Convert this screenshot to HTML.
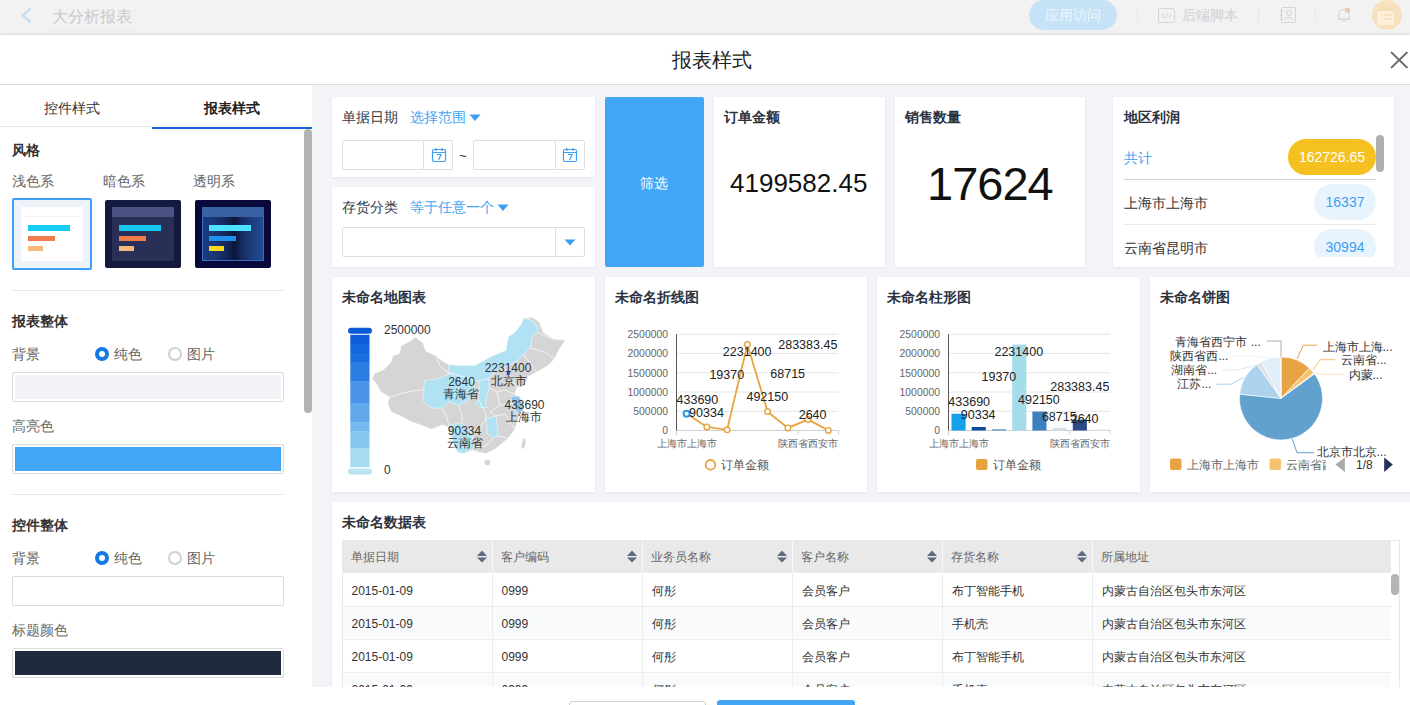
<!DOCTYPE html>
<html><head><meta charset="utf-8">
<style>
*{box-sizing:border-box;margin:0;padding:0}
html,body{width:1410px;height:705px;overflow:hidden;background:#fff;font-family:"Liberation Sans",sans-serif;color:#333}
.a{position:absolute;white-space:nowrap}
#top{position:absolute;left:0;top:0;width:1410px;height:35px;background:#f2f2f2}
#modal{position:absolute;left:0;top:35px;width:1410px;height:670px;background:#fff;box-shadow:0 -1px 3px rgba(0,0,0,.10)}
.t14{font-size:14px;line-height:14px}
.card{position:absolute;background:#fff;box-shadow:0 1px 3px rgba(30,40,70,.06)}
.ttl{position:absolute;font-size:14px;line-height:14px;font-weight:bold;color:#2b3340;white-space:nowrap}
</style></head><body>
<div id="top">
  <svg class="a" style="left:20px;top:7px" width="14" height="18" viewBox="0 0 14 18"><path d="M10.5 1.5 L2.8 8.5 L10.5 15.5" fill="none" stroke="#b9dcf5" stroke-width="1.9"/></svg>
  <div class="a" style="left:52px;top:9px;font-size:16px;line-height:16px;color:#c9c9c9">大分析报表</div>
  <div class="a" style="left:50px;top:30px;width:88px;border-top:1px dashed #e6e6e6"></div>
  <div class="a" style="left:1029px;top:0px;width:88px;height:30px;border-radius:15px;background:#c6e2f6;color:#eef6fd;font-size:14px;line-height:30px;text-align:center">应用访问</div>
  <div class="a" style="left:1137px;top:8px;width:1px;height:14px;background:#e6e6e6"></div>
  <svg class="a" style="left:1158px;top:8px" width="17" height="15" viewBox="0 0 17 15"><rect x="0.5" y="0.5" width="16" height="14" rx="2" fill="none" stroke="#d4d4d4"/><path d="M6 5 L4 7.5 L6 10 M11 5 L13 7.5 L11 10 M9.5 4.5 L7.5 10.5" fill="none" stroke="#d4d4d4" stroke-width="1"/></svg>
  <div class="a" style="left:1182px;top:8px;font-size:14px;line-height:14px;color:#d0d0d0">后端脚本</div>
  <div class="a" style="left:1258px;top:8px;width:1px;height:14px;background:#e6e6e6"></div>
  <svg class="a" style="left:1280px;top:7px" width="16" height="16" viewBox="0 0 16 16"><rect x="1.5" y="0.5" width="14" height="15" rx="1" fill="none" stroke="#d4d4d4"/><circle cx="9" cy="6" r="2.5" fill="none" stroke="#d4d4d4"/><path d="M4.5 13 Q9 7.5 13 13" fill="none" stroke="#d4d4d4"/><path d="M0 4h3M0 8h3M0 12h3" stroke="#d4d4d4"/></svg>
  <div class="a" style="left:1315px;top:8px;width:1px;height:14px;background:#e6e6e6"></div>
  <svg class="a" style="left:1337px;top:7px" width="14" height="16" viewBox="0 0 14 16"><path d="M2 12 L2 7 Q2 2.5 7 2.5 Q12 2.5 12 7 L12 12 Z M1 12.5 H13 M5.5 14.5 H8.5" fill="none" stroke="#d4d4d4" stroke-width="1.1"/><circle cx="10.5" cy="3" r="2.6" fill="#e9c8ae"/></svg>
  <div class="a" style="left:1372px;top:0px;width:30px;height:30px;border-radius:15px;background:#f7e2bd"></div>
  <svg class="a" style="left:1377px;top:6px" width="18" height="19" viewBox="0 0 18 19"><rect x="1" y="1" width="16" height="18" rx="1.5" fill="#fbf0dc"/><rect x="1" y="1" width="16" height="4" fill="#f3e0bb"/><path d="M4 9h1.5M7 9h7M4 13h1.5M7 13h7" stroke="#f3dcb2" stroke-width="1.5"/></svg>
</div>
<div id="modal"></div>
<!-- modal header -->
<div class="a" style="left:672px;top:49px;font-size:20px;line-height:22px;color:#222">报表样式</div>
<svg class="a" style="left:1389px;top:50px" width="21" height="20" viewBox="0 0 21 20"><path d="M2.6 2.6 L17.8 17.4 M17.8 2.6 L2.6 17.4" stroke="#666" stroke-width="2" stroke-linecap="round"/></svg>
<div class="a" style="left:0;top:84px;width:1410px;height:1px;background:#dcdcdc"></div>
<!-- left panel -->
<div class="a" style="left:44px;top:100px;font-size:14px;line-height:16px;color:#333">控件样式</div>
<div class="a" style="left:204px;top:100px;font-size:14px;line-height:16px;color:#222;font-weight:bold">报表样式</div>
<div class="a" style="left:0;top:126px;width:152px;height:1px;background:#e4e4e4"></div>
<div class="a" style="left:152px;top:127px;width:160px;height:2px;background:#1565d8"></div>
<div class="a" style="left:304px;top:129px;width:8px;height:284px;border-radius:4px;background:#b3b3b3"></div>

<div class="a t14" style="left:12px;top:143px;font-weight:bold;color:#333">风格</div>
<div class="a t14" style="left:12px;top:174px;color:#666">浅色系</div>
<div class="a t14" style="left:103px;top:174px;color:#666">暗色系</div>
<div class="a t14" style="left:193px;top:174px;color:#666">透明系</div>
<!-- thumb light -->
<div class="a" style="left:12px;top:198px;width:80px;height:72px;border:2px solid #3a9ff5;border-radius:2px;background:#eef3f9"></div>
<div class="a" style="left:21px;top:207px;width:62px;height:54px;background:#fff"></div>
<div class="a" style="left:26px;top:216px;width:52px;height:1px;background:#f1f1f1"></div>
<div class="a" style="left:28px;top:225px;width:42px;height:6px;background:#14cdf0"></div>
<div class="a" style="left:28px;top:236px;width:27px;height:5px;background:#f07d4c"></div>
<div class="a" style="left:28px;top:246px;width:15px;height:5px;background:#f5b97c"></div>
<!-- thumb dark -->
<div class="a" style="left:105px;top:200px;width:76px;height:68px;border-radius:2px;background:#141a3f"></div>
<div class="a" style="left:112px;top:207px;width:62px;height:54px;background:#2a2f55"></div>
<div class="a" style="left:112px;top:207px;width:62px;height:10px;background:#4b5283"></div>
<div class="a" style="left:119px;top:225px;width:42px;height:6px;background:#13c7ef"></div>
<div class="a" style="left:119px;top:236px;width:27px;height:5px;background:#f07d4c"></div>
<div class="a" style="left:119px;top:246px;width:15px;height:5px;background:#f5b97c"></div>
<!-- thumb transparent -->
<div class="a" style="left:195px;top:200px;width:76px;height:68px;border-radius:2px;background:#08083a"></div>
<div class="a" style="left:202px;top:207px;width:62px;height:54px;border:1px solid #3a6fc0;background:linear-gradient(90deg,#1c3d80 0%,#1a3570 20%,#14265a 40%,#0c1538 52%,#162c62 65%,#1d4283 85%,#1f4c95 100%)"></div>
<div class="a" style="left:202px;top:207px;width:62px;height:10px;background:#3962a6"></div>
<div class="a" style="left:209px;top:225px;width:42px;height:6px;background:#4be2fb"></div>
<div class="a" style="left:209px;top:236px;width:27px;height:5px;background:#1e90ee"></div>
<div class="a" style="left:209px;top:246px;width:15px;height:5px;background:#f8d61c"></div>

<div class="a" style="left:12px;top:290px;width:272px;height:1px;background:#e8e8e8"></div>
<div class="a t14" style="left:12px;top:314px;font-weight:bold;color:#333">报表整体</div>
<div class="a t14" style="left:12px;top:347px;color:#666">背景</div>
<div class="a" style="left:95px;top:347px;width:14px;height:14px;border-radius:7px;border:4px solid #1677e6;background:#fff"></div>
<div class="a t14" style="left:114px;top:347px;color:#666">纯色</div>
<div class="a" style="left:168px;top:347px;width:14px;height:14px;border-radius:7px;border:2px solid #d0d0d0;background:#fff"></div>
<div class="a t14" style="left:187px;top:347px;color:#666">图片</div>
<div class="a" style="left:12px;top:372px;width:272px;height:30px;border:1px solid #dcdcdc;border-radius:2px;background:#fff"></div>
<div class="a" style="left:15px;top:375px;width:266px;height:24px;background:#f2f3f7"></div>
<div class="a t14" style="left:12px;top:419px;color:#666">高亮色</div>
<div class="a" style="left:12px;top:444px;width:272px;height:30px;border:1px solid #dcdcdc;border-radius:2px;background:#fff"></div>
<div class="a" style="left:15px;top:447px;width:266px;height:24px;background:#42a6f8"></div>
<div class="a" style="left:12px;top:494px;width:272px;height:1px;background:#e8e8e8"></div>
<div class="a t14" style="left:12px;top:518px;font-weight:bold;color:#333">控件整体</div>
<div class="a t14" style="left:12px;top:551px;color:#666">背景</div>
<div class="a" style="left:95px;top:551px;width:14px;height:14px;border-radius:7px;border:4px solid #1677e6;background:#fff"></div>
<div class="a t14" style="left:114px;top:551px;color:#666">纯色</div>
<div class="a" style="left:168px;top:551px;width:14px;height:14px;border-radius:7px;border:2px solid #d0d0d0;background:#fff"></div>
<div class="a t14" style="left:187px;top:551px;color:#666">图片</div>
<div class="a" style="left:12px;top:576px;width:272px;height:30px;border:1px solid #dcdcdc;border-radius:2px;background:#fff"></div>
<div class="a t14" style="left:12px;top:623px;color:#666">标题颜色</div>
<div class="a" style="left:12px;top:648px;width:272px;height:30px;border:1px solid #dcdcdc;border-radius:2px;background:#fff"></div>
<div class="a" style="left:15px;top:651px;width:266px;height:24px;background:#1f2b3c"></div>

<!-- content bg -->
<div class="a" style="left:312px;top:85px;width:1098px;height:602px;background:#f3f4f8;overflow:hidden" id="content"></div>
<!-- row1 -->
<div class="card" style="left:332px;top:97px;width:263px;height:80px"></div>
<div class="a t14" style="left:342px;top:110px;color:#2f3a48">单据日期</div>
<div class="a t14" style="left:410px;top:110px;color:#42a5f5">选择范围</div>
<svg class="a" style="left:469px;top:114px" width="12" height="8" viewBox="0 0 12 8"><path d="M0.5 0.5 H11.5 L6 7 Z" fill="#3d9ff2"/></svg>
<div class="a" style="left:342px;top:140px;width:111px;height:30px;border:1px solid #dedede;border-radius:2px;background:#fff"></div>
<div class="a" style="left:423px;top:141px;width:1px;height:28px;background:#dedede"></div>
<svg class="a" style="left:431px;top:147px" width="16" height="16" viewBox="0 0 16 16"><rect x="1.5" y="2.5" width="13" height="12" rx="1.5" fill="none" stroke="#3d9ff2" stroke-width="1.2"/><path d="M1.5 5.5 H14.5 M5 1 V4 M11 1 V4" stroke="#3d9ff2" stroke-width="1.2"/><path d="M5.8 7.5 H10 L7.5 13" fill="none" stroke="#3d9ff2" stroke-width="1.2"/></svg>
<div class="a" style="left:459px;top:149px;font-size:13px;line-height:14px;color:#333">~</div>
<div class="a" style="left:473px;top:140px;width:112px;height:30px;border:1px solid #dedede;border-radius:2px;background:#fff"></div>
<div class="a" style="left:555px;top:141px;width:1px;height:28px;background:#dedede"></div>
<svg class="a" style="left:562px;top:147px" width="16" height="16" viewBox="0 0 16 16"><rect x="1.5" y="2.5" width="13" height="12" rx="1.5" fill="none" stroke="#3d9ff2" stroke-width="1.2"/><path d="M1.5 5.5 H14.5 M5 1 V4 M11 1 V4" stroke="#3d9ff2" stroke-width="1.2"/><path d="M5.8 7.5 H10 L7.5 13" fill="none" stroke="#3d9ff2" stroke-width="1.2"/></svg>

<div class="card" style="left:332px;top:187px;width:263px;height:80px"></div>
<div class="a t14" style="left:342px;top:200px;color:#2f3a48">存货分类</div>
<div class="a t14" style="left:410px;top:200px;color:#42a5f5">等于任意一个</div>
<svg class="a" style="left:497px;top:204px" width="12" height="8" viewBox="0 0 12 8"><path d="M0.5 0.5 H11.5 L6 7 Z" fill="#3d9ff2"/></svg>
<div class="a" style="left:342px;top:227px;width:243px;height:30px;border:1px solid #dedede;border-radius:2px;background:#fff"></div>
<div class="a" style="left:555px;top:228px;width:1px;height:28px;background:#dedede"></div>
<svg class="a" style="left:564px;top:239px" width="12" height="7" viewBox="0 0 12 7"><path d="M0.5 0.5 H11.5 L6 6.5 Z" fill="#3d9ff2"/></svg>

<div class="a" style="left:605px;top:97px;width:99px;height:170px;border-radius:2px;background:#42a6f6"></div>
<div class="a t14" style="left:640px;top:176px;color:#fff">筛选</div>

<div class="card" style="left:714px;top:97px;width:171px;height:170px"></div>
<div class="ttl" style="left:724px;top:110px">订单金额</div>
<div class="a" style="left:730px;top:168px;font-size:26px;line-height:30px;color:#111">4199582.45</div>

<div class="card" style="left:895px;top:97px;width:190px;height:170px"></div>
<div class="ttl" style="left:905px;top:110px">销售数量</div>
<div class="a" style="left:927px;top:159px;font-size:47px;line-height:50px;color:#111;letter-spacing:-1px">17624</div>

<div class="card" style="left:1113px;top:97px;width:281px;height:170px"></div>
<div class="ttl" style="left:1124px;top:110px">地区利润</div>
<div class="a" style="left:1113px;top:134px;width:281px;height:123px;overflow:hidden">
  <div class="a t14" style="left:11px;top:17px;color:#3d9ff2">共计</div>
  <div class="a" style="left:175px;top:5px;width:88px;height:36px;border-radius:18px;background:#f5c120;color:#fff;font-size:14px;line-height:36px;text-align:center">162726.65</div>
  <div class="a" style="left:11px;top:45px;width:252px;height:1px;background:#cfd0d6"></div>
  <div class="a t14" style="left:11px;top:62px;color:#333">上海市上海市</div>
  <div class="a" style="left:201px;top:50px;width:62px;height:36px;border-radius:18px;background:#e8f4fd;color:#3d9ff2;font-size:14px;line-height:36px;text-align:center">16337</div>
  <div class="a" style="left:11px;top:90px;width:252px;height:1px;background:#ebebeb"></div>
  <div class="a t14" style="left:11px;top:107px;color:#333">云南省昆明市</div>
  <div class="a" style="left:201px;top:95px;width:62px;height:36px;border-radius:18px;background:#e8f4fd;color:#3d9ff2;font-size:14px;line-height:36px;text-align:center">30994</div>
  <div class="a" style="left:263px;top:1px;width:8px;height:37px;border-radius:4px;background:#b0b0b0"></div>
</div>

<!-- charts -->
<div class="card" style="left:332px;top:277px;width:263px;height:215px"></div>
<div class="ttl" style="left:342px;top:290px">未命名地图表</div>
<svg class="a" style="left:332px;top:277px" width="263" height="215" viewBox="332 277 263 215">
<defs><linearGradient id="vm" x1="0" y1="0" x2="0" y2="1"><stop offset="0" stop-color="#0a5bd6"/><stop offset="0.45" stop-color="#3f8fe6"/><stop offset="1" stop-color="#a9dcf3"/></linearGradient></defs>
<rect x="348" y="327.8" width="24" height="6" rx="3" fill="#0b5ad6"/>
<rect x="350.3" y="334.8" width="19.2" height="9.4" fill="#0e5ddb"/>
<rect x="350.3" y="343.9" width="19.2" height="9.4" fill="#1366dd"/>
<rect x="350.3" y="353" width="19.2" height="9.3" fill="#1a6fe0"/>
<rect x="350.3" y="362" width="19.2" height="19.7" fill="#2a7de3"/>
<rect x="350.3" y="381.4" width="19.2" height="21.9" fill="#4a93e8"/>
<rect x="350.3" y="403" width="19.2" height="19.6" fill="#62a8ec"/>
<rect x="350.3" y="422.3" width="19.2" height="9.4" fill="#74b9ee"/>
<rect x="350.3" y="431.4" width="19.2" height="17.3" fill="#88c8ef"/>
<rect x="350.3" y="448.4" width="19.2" height="18.7" fill="#a5dcef"/>
<rect x="348" y="468.5" width="24" height="6" rx="3" fill="#b8e4f4"/>
<text x="384" y="334" font-size="12" fill="#333" font-family="Liberation Sans">2500000</text>
<text x="384" y="474" font-size="12" fill="#333" font-family="Liberation Sans">0</text>
<polygon points="372.2,378.7 374.4,373.2 383.2,370 390.9,362.3 393.1,355.7 399.7,353.5 400.8,345.8 409.6,341.4 415.1,337 422.7,342.5 426,351.3 435.9,355.7 442.5,361.2 448.8,364.5 462,365.6 475.2,365.6 490.6,356.8 506,350.2 508.2,337 514.8,332.6 521.4,323.8 523.6,318.3 532.4,317.2 539,321.6 543.4,332.6 554.4,339.2 565.4,340.3 559.9,348 554.4,359 547.8,365.6 536.8,372.2 528,376.6 524.7,385.4 517,387.6 514.8,394.2 521.4,398.6 523.6,409.6 519.2,416.2 514.8,429.4 508.2,438.2 495,449.2 486.2,453.6 479.6,452.5 473,450.3 464.2,453.6 457.6,452.5 453.2,442.6 448,427.1 442.5,424.9 431.5,429.3 420.5,424.9 410.7,421.6 400.8,416.1 390.9,411.7 387.6,402.9 389.8,397.4 381,391.9 376.6,384.2" fill="#d5d5d5" stroke="#fff" stroke-width="0.5"/>
<ellipse cx="487.3" cy="462.4" rx="3" ry="2.6" fill="#d5d5d5"/>
<ellipse cx="523.6" cy="443.7" rx="1.8" ry="5.2" fill="#d5d5d5" transform="rotate(12 523.6 443.7)"/>
<polygon points="448.8,364.5 462,365.6 475.2,365.6 490.6,356.8 506,350.2 508.2,337 514.8,332.6 521.4,323.8 523.6,318.3 530.2,319.4 536.8,326 537.9,332.6 532.4,335.9 530.2,348 523.6,354.6 517,361.2 503.8,367.8 495,372.2 488.4,378.8 478.5,381 462,376.6 448.8,372.2" fill="#b0e2f3" stroke="#fff" stroke-width="0.5"/>
<polygon points="478.5,381 488.4,378.8 489.5,387.6 485.1,403 487.3,407.4 479.6,407.4 476.3,403 479.6,392" fill="#b0e2f3" stroke="#fff" stroke-width="0.5"/>
<polygon points="424.5,380.8 439.9,378.1 449.5,373.6 461.5,376.3 472.1,378.6 474.4,387.2 476,394.5 467.6,400.8 458.5,405.8 449.5,401.3 442.6,408.1 430.8,408.1 422.9,400.8" fill="#b0e2f3" stroke="#fff" stroke-width="0.5"/>
<polygon points="486.2,418.4 496.1,416.2 498.3,436 492.8,438.2 487.3,433.8" fill="#b0e2f3" stroke="#fff" stroke-width="0.5"/>
<polygon points="448.8,425 462,422.8 470.8,431.6 475.2,447 464.2,453.6 457.6,452.5 453.2,442.6" fill="#b0e2f3" stroke="#fff" stroke-width="0.5"/>
<polygon points="510.4,396.4 519.2,396 523.6,407.4 522.5,411.8 515.9,411.8 512.6,403" fill="#8cc6ec" stroke="#fff" stroke-width="0.5"/>
<polyline points="389.8,397.4 402.8,393 413.9,390.8 423.8,389.7" fill="none" stroke="#fff" stroke-width="0.7"/>
<polyline points="435.9,355.7 440,366 449.5,373.6" fill="none" stroke="#fff" stroke-width="0.7"/>
<polyline points="442.6,408.1 447,418 448.8,425" fill="none" stroke="#fff" stroke-width="0.7"/>
<polyline points="458.5,405.8 462,414 462,422.8" fill="none" stroke="#fff" stroke-width="0.7"/>
<polyline points="476,394.5 485,412 486.2,418.4" fill="none" stroke="#fff" stroke-width="0.7"/>
<polyline points="470.8,431.6 480,428 486.2,418.4" fill="none" stroke="#fff" stroke-width="0.7"/>
<polyline points="475.2,447 486,446 492.8,438.2" fill="none" stroke="#fff" stroke-width="0.7"/>
<polyline points="498.3,436 508.2,438.2" fill="none" stroke="#fff" stroke-width="0.7"/>
<polyline points="496.1,416.2 505,414 514.8,429.4" fill="none" stroke="#fff" stroke-width="0.7"/>
<polyline points="489.5,387.6 497,392 505,390 514.8,394.2" fill="none" stroke="#fff" stroke-width="0.7"/>
<polyline points="497,392 500,405 512.6,403" fill="none" stroke="#fff" stroke-width="0.7"/>
<polyline points="503.8,367.8 510,376 517,387.6" fill="none" stroke="#fff" stroke-width="0.7"/>
<polyline points="530.2,348 545,352 554.4,359" fill="none" stroke="#fff" stroke-width="0.7"/>
<polyline points="537.9,332.6 548,337 554.4,339.2" fill="none" stroke="#fff" stroke-width="0.7"/>
<polyline points="523.6,354.6 536.8,372.2" fill="none" stroke="#fff" stroke-width="0.7"/>
<polyline points="500,405 490,412 496.1,416.2" fill="none" stroke="#fff" stroke-width="0.7"/>
<rect x="506.8" y="372" width="3" height="3" fill="#1456c8"/>
<text x="508" y="372" font-size="12" fill="#333" text-anchor="middle" font-family="Liberation Sans">2231400</text>
<text x="508.5" y="385" font-size="12" fill="#333" text-anchor="middle" font-family="Liberation Sans">北京市</text>
<text x="461.5" y="386" font-size="12" fill="#333" text-anchor="middle" font-family="Liberation Sans">2640</text>
<text x="461" y="398" font-size="12" fill="#333" text-anchor="middle" font-family="Liberation Sans">青海省</text>
<text x="524.5" y="409" font-size="12" fill="#333" text-anchor="middle" font-family="Liberation Sans">433690</text>
<text x="524" y="421" font-size="12" fill="#333" text-anchor="middle" font-family="Liberation Sans">上海市</text>
<text x="464.5" y="435" font-size="12" fill="#333" text-anchor="middle" font-family="Liberation Sans">90334</text>
<text x="464.5" y="447" font-size="12" fill="#333" text-anchor="middle" font-family="Liberation Sans">云南省</text>
</svg>
<div class="card" style="left:605px;top:277px;width:262px;height:215px"></div>
<div class="ttl" style="left:615px;top:290px">未命名折线图</div>
<svg class="a" style="left:605px;top:277px" width="262" height="215" viewBox="605 277 262 215">
<line x1="676.5" x2="838.5" y1="430.5" y2="430.5" stroke="#d0d0d0" stroke-width="1"/>
<text x="668.0" y="434.3" font-size="10.4" fill="#666" text-anchor="end" font-family="Liberation Sans">0</text>
<line x1="676.5" x2="838.5" y1="411.3" y2="411.3" stroke="#e6e6e6" stroke-width="1"/>
<text x="668.0" y="415.1" font-size="10.4" fill="#666" text-anchor="end" font-family="Liberation Sans">500000</text>
<line x1="676.5" x2="838.5" y1="392.0" y2="392.0" stroke="#e6e6e6" stroke-width="1"/>
<text x="668.0" y="395.8" font-size="10.4" fill="#666" text-anchor="end" font-family="Liberation Sans">1000000</text>
<line x1="676.5" x2="838.5" y1="372.8" y2="372.8" stroke="#e6e6e6" stroke-width="1"/>
<text x="668.0" y="376.6" font-size="10.4" fill="#666" text-anchor="end" font-family="Liberation Sans">1500000</text>
<line x1="676.5" x2="838.5" y1="353.5" y2="353.5" stroke="#e6e6e6" stroke-width="1"/>
<text x="668.0" y="357.3" font-size="10.4" fill="#666" text-anchor="end" font-family="Liberation Sans">2000000</text>
<line x1="676.5" x2="838.5" y1="334.3" y2="334.3" stroke="#e6e6e6" stroke-width="1"/>
<text x="668.0" y="338.1" font-size="10.4" fill="#666" text-anchor="end" font-family="Liberation Sans">2500000</text>
<line x1="676.5" x2="676.5" y1="334.3" y2="434.5" stroke="#555" stroke-width="1"/>
<line x1="676.5" x2="676.5" y1="430.5" y2="434.5" stroke="#d0d0d0" stroke-width="1"/>
<line x1="798.0" x2="798.0" y1="430.5" y2="434.5" stroke="#d0d0d0" stroke-width="1"/>
<line x1="838.5" x2="838.5" y1="430.5" y2="434.5" stroke="#d0d0d0" stroke-width="1"/>
<text x="686.6" y="447" font-size="10" fill="#666" text-anchor="middle" font-family="Liberation Sans">上海市上海市</text>
<text x="808.1" y="447" font-size="10" fill="#666" text-anchor="middle" font-family="Liberation Sans">陕西省西安市</text>
<polyline points="686.6,413.8 706.9,427.0 727.1,429.8 747.4,344.6 767.6,411.6 787.9,427.9 808.1,419.6 828.4,430.4" fill="none" stroke="#e8a33f" stroke-width="1.8"/>
<circle cx="686.6" cy="413.8" r="3" fill="#fff" stroke="#2a9be8" stroke-width="2"/>
<circle cx="706.9" cy="427.0" r="2.8" fill="#fff" stroke="#e8a33f" stroke-width="1.4"/>
<circle cx="727.1" cy="429.8" r="2.8" fill="#fff" stroke="#e8a33f" stroke-width="1.4"/>
<circle cx="747.4" cy="344.6" r="2.8" fill="#fff" stroke="#e8a33f" stroke-width="1.4"/>
<circle cx="767.6" cy="411.6" r="2.8" fill="#fff" stroke="#e8a33f" stroke-width="1.4"/>
<circle cx="787.9" cy="427.9" r="2.8" fill="#fff" stroke="#e8a33f" stroke-width="1.4"/>
<circle cx="808.1" cy="419.6" r="2.8" fill="#fff" stroke="#e8a33f" stroke-width="1.4"/>
<circle cx="828.4" cy="430.4" r="2.8" fill="#fff" stroke="#e8a33f" stroke-width="1.4"/>
<text x="697.4" y="403.5" font-size="12.5" fill="#222" text-anchor="middle" font-family="Liberation Sans">433690</text>
<text x="706.5" y="416.5" font-size="12.5" fill="#222" text-anchor="middle" font-family="Liberation Sans">90334</text>
<text x="726.8" y="378.5" font-size="12.5" fill="#222" text-anchor="middle" font-family="Liberation Sans">19370</text>
<text x="747.2" y="356" font-size="12.5" fill="#222" text-anchor="middle" font-family="Liberation Sans">2231400</text>
<text x="767.3" y="400.5" font-size="12.5" fill="#222" text-anchor="middle" font-family="Liberation Sans">492150</text>
<text x="787.7" y="377.5" font-size="12.5" fill="#222" text-anchor="middle" font-family="Liberation Sans">68715</text>
<text x="807.8" y="349" font-size="12.5" fill="#222" text-anchor="middle" font-family="Liberation Sans">283383.45</text>
<text x="812.6" y="419.3" font-size="12.5" fill="#222" text-anchor="middle" font-family="Liberation Sans">2640</text>
<circle cx="710.5" cy="464.8" r="4.8" fill="#fff" stroke="#e8a33f" stroke-width="1.8"/>
<text x="721" y="469" font-size="12" fill="#555" font-family="Liberation Sans">订单金额</text>
</svg>
<div class="card" style="left:877px;top:277px;width:263px;height:215px"></div>
<div class="ttl" style="left:887px;top:290px">未命名柱形图</div>
<svg class="a" style="left:877px;top:277px" width="263" height="215" viewBox="877 277 263 215">
<line x1="948.5" x2="1110.2" y1="430.5" y2="430.5" stroke="#d0d0d0" stroke-width="1"/>
<text x="940.0" y="434.3" font-size="10.4" fill="#666" text-anchor="end" font-family="Liberation Sans">0</text>
<line x1="948.5" x2="1110.2" y1="411.3" y2="411.3" stroke="#e6e6e6" stroke-width="1"/>
<text x="940.0" y="415.1" font-size="10.4" fill="#666" text-anchor="end" font-family="Liberation Sans">500000</text>
<line x1="948.5" x2="1110.2" y1="392.0" y2="392.0" stroke="#e6e6e6" stroke-width="1"/>
<text x="940.0" y="395.8" font-size="10.4" fill="#666" text-anchor="end" font-family="Liberation Sans">1000000</text>
<line x1="948.5" x2="1110.2" y1="372.8" y2="372.8" stroke="#e6e6e6" stroke-width="1"/>
<text x="940.0" y="376.6" font-size="10.4" fill="#666" text-anchor="end" font-family="Liberation Sans">1500000</text>
<line x1="948.5" x2="1110.2" y1="353.5" y2="353.5" stroke="#e6e6e6" stroke-width="1"/>
<text x="940.0" y="357.3" font-size="10.4" fill="#666" text-anchor="end" font-family="Liberation Sans">2000000</text>
<line x1="948.5" x2="1110.2" y1="334.3" y2="334.3" stroke="#e6e6e6" stroke-width="1"/>
<text x="940.0" y="338.1" font-size="10.4" fill="#666" text-anchor="end" font-family="Liberation Sans">2500000</text>
<line x1="948.5" x2="948.5" y1="334.3" y2="434.5" stroke="#555" stroke-width="1"/>
<line x1="948.5" x2="948.5" y1="430.5" y2="434.5" stroke="#d0d0d0" stroke-width="1"/>
<line x1="1069.8" x2="1069.8" y1="430.5" y2="434.5" stroke="#d0d0d0" stroke-width="1"/>
<line x1="1110.2" x2="1110.2" y1="430.5" y2="434.5" stroke="#d0d0d0" stroke-width="1"/>
<text x="958.6" y="447" font-size="10" fill="#666" text-anchor="middle" font-family="Liberation Sans">上海市上海市</text>
<text x="1079.9" y="447" font-size="10" fill="#666" text-anchor="middle" font-family="Liberation Sans">陕西省西安市</text>
<rect x="951.5" y="413.8" width="14.1" height="16.7" fill="#12a1ea"/>
<rect x="971.7" y="427.0" width="14.1" height="3.5" fill="#0f4b9c"/>
<rect x="992.0" y="429.3" width="14.1" height="1.2" fill="#4a90d0"/>
<rect x="1012.2" y="344.6" width="14.1" height="85.9" fill="#a5dcea"/>
<rect x="1032.4" y="411.6" width="14.1" height="18.9" fill="#3b7fbf"/>
<rect x="1052.6" y="427.9" width="14.1" height="2.6" fill="#d5dfea"/>
<rect x="1072.8" y="419.6" width="14.1" height="10.9" fill="#2b4a87"/>
<rect x="1093.0" y="429.3" width="14.1" height="1.2" fill="#e3eef5"/>
<text x="969.2" y="406" font-size="12.5" fill="#222" text-anchor="middle" font-family="Liberation Sans">433690</text>
<text x="978.2" y="419" font-size="12.5" fill="#222" text-anchor="middle" font-family="Liberation Sans">90334</text>
<text x="998.9" y="381" font-size="12.5" fill="#222" text-anchor="middle" font-family="Liberation Sans">19370</text>
<text x="1018.8" y="356" font-size="12.5" fill="#222" text-anchor="middle" font-family="Liberation Sans">2231400</text>
<text x="1038.9" y="403.5" font-size="12.5" fill="#222" text-anchor="middle" font-family="Liberation Sans">492150</text>
<text x="1059.3" y="420.5" font-size="12.5" fill="#222" text-anchor="middle" font-family="Liberation Sans">68715</text>
<text x="1079.8" y="391" font-size="12.5" fill="#222" text-anchor="middle" font-family="Liberation Sans">283383.45</text>
<text x="1084.6" y="422.5" font-size="12.5" fill="#222" text-anchor="middle" font-family="Liberation Sans">2640</text>
<rect x="976" y="459" width="11.5" height="11" rx="2" fill="#e8a33f"/>
<text x="993" y="469" font-size="12" fill="#555" font-family="Liberation Sans">订单金额</text>
</svg>
<div class="card" style="left:1150px;top:277px;width:270px;height:215px"></div>
<div class="ttl" style="left:1160px;top:290px">未命名饼图</div>
<svg class="a" style="left:1150px;top:277px" width="260" height="215" viewBox="1150 277 260 215">
<path d="M1281,398.4 L1281.00,356.90 A41.5,41.5 0 0 1 1309.36,368.10 Z" fill="#e8a444" stroke="#fff" stroke-width="0.6"/>
<path d="M1281,398.4 L1309.36,368.10 A41.5,41.5 0 0 1 1313.74,372.90 Z" fill="#f5c36e" stroke="#fff" stroke-width="0.6"/>
<path d="M1281,398.4 L1313.74,372.90 A41.5,41.5 0 0 1 1314.58,374.02 Z" fill="#f8e2b6" stroke="#fff" stroke-width="0.6"/>
<path d="M1281,398.4 L1314.58,374.02 A41.5,41.5 0 1 1 1239.71,394.19 Z" fill="#62a0cd" stroke="#fff" stroke-width="0.6"/>
<path d="M1281,398.4 L1239.71,394.19 A41.5,41.5 0 0 1 1257.04,364.51 Z" fill="#acd2ee" stroke="#fff" stroke-width="0.6"/>
<path d="M1281,398.4 L1257.04,364.51 A41.5,41.5 0 0 1 1261.24,361.91 Z" fill="#dde2e8" stroke="#fff" stroke-width="0.6"/>
<path d="M1281,398.4 L1261.24,361.91 A41.5,41.5 0 0 1 1280.81,356.90 Z" fill="#e2effa" stroke="#fff" stroke-width="0.6"/>
<path d="M1281,398.4 L1280.81,356.90 A41.5,41.5 0 0 1 1281.00,356.90 Z" fill="#c9d3dc" stroke="#fff" stroke-width="0.6"/>
<polyline points="1297,359 1303.4,345.2 1317.2,345.2" fill="none" stroke="#e8a444" stroke-width="1"/>
<polyline points="1313,369.7 1320.4,359.7 1335.3,359.7" fill="none" stroke="#f5c36e" stroke-width="1"/>
<polyline points="1315,373.5 1326.8,374.4 1343.8,374.4" fill="none" stroke="#f6e4c4" stroke-width="1"/>
<polyline points="1292.3,438.9 1297,452.7 1314,452.7" fill="none" stroke="#62a0cd" stroke-width="1"/>
<polyline points="1243.8,377.2 1231,384.2 1216,384.2" fill="none" stroke="#acd2ee" stroke-width="1"/>
<polyline points="1259.7,364.4 1237.4,370.1 1222.5,370.1" fill="none" stroke="#e2e6ea" stroke-width="1"/>
<polyline points="1271.4,358 1250.1,355.9 1234.2,355.9" fill="none" stroke="#e8f2fa" stroke-width="1"/>
<polyline points="1281,357 1281,341 1266.7,341" fill="none" stroke="#b9aaa8" stroke-width="1"/>
<text x="1322.5" y="350.5" font-size="12" fill="#333" text-anchor="start" font-family="Liberation Sans">上海市上海...</text>
<text x="1340.6" y="364" font-size="12" fill="#333" text-anchor="start" font-family="Liberation Sans">云南省...</text>
<text x="1348.5" y="378.5" font-size="12" fill="#333" text-anchor="start" font-family="Liberation Sans">内蒙...</text>
<text x="1316.6" y="456" font-size="12" fill="#333" text-anchor="start" font-family="Liberation Sans">北京市北京...</text>
<text x="1211.4" y="387.5" font-size="12" fill="#333" text-anchor="end" font-family="Liberation Sans">江苏...</text>
<text x="1217.2" y="373.8" font-size="12" fill="#333" text-anchor="end" font-family="Liberation Sans">湖南省...</text>
<text x="1228.4" y="359.8" font-size="12" fill="#333" text-anchor="end" font-family="Liberation Sans">陕西省西...</text>
<text x="1260.8" y="345.5" font-size="12" fill="#333" text-anchor="end" font-family="Liberation Sans">青海省西宁市 ...</text>
<rect x="1170" y="458.5" width="11.5" height="11.5" rx="2" fill="#e8a444"/>
<text x="1187" y="469" font-size="12" fill="#666" font-family="Liberation Sans">上海市上海市</text>
<rect x="1269.5" y="458.5" width="11.5" height="11.5" rx="2" fill="#f5c36e"/>
<svg x="1286" y="455" width="40" height="20" overflow="hidden"><text x="0" y="14" font-size="12" fill="#666" font-family="Liberation Sans">云南省西</text></svg>
<path d="M1344.9,457.4 L1335.3,464.6 L1344.9,471.9 Z" fill="#aaaaaa"/>
<text x="1364.3" y="469" font-size="12" fill="#333" text-anchor="middle" font-family="Liberation Sans">1/8</text>
<path d="M1384.2,457.4 L1392.8,464.6 L1384.2,471.9 Z" fill="#253158"/>
</svg>
<div class="card" style="left:332px;top:502px;width:1078px;height:185px"></div>
<div class="ttl" style="left:342px;top:515px">未命名数据表</div>
<div class="a" style="left:342px;top:540px;width:1058px;height:147px;overflow:hidden;border-left:1px solid #e8e8e8">
<div class="a" style="left:0;top:0;width:1048px;height:33px;background:#e9e9ea"></div>
<div class="a" style="left:8.3px;top:10px;font-size:12px;line-height:14px;color:#666">单据日期</div>
<svg class="a" style="left:134px;top:10px" width="10" height="13" viewBox="0 0 10 13"><path d="M0,6 L5,0.5 L10,6 Z M0,7.5 L5,12.5 L10,7.5 Z" fill="#5f6b7f"/></svg>
<div class="a" style="left:149px;top:0;width:1px;height:33px;background:#f8f8f8"></div>
<div class="a" style="left:158.3px;top:10px;font-size:12px;line-height:14px;color:#666">客户编码</div>
<svg class="a" style="left:284px;top:10px" width="10" height="13" viewBox="0 0 10 13"><path d="M0,6 L5,0.5 L10,6 Z M0,7.5 L5,12.5 L10,7.5 Z" fill="#5f6b7f"/></svg>
<div class="a" style="left:299px;top:0;width:1px;height:33px;background:#f8f8f8"></div>
<div class="a" style="left:308.3px;top:10px;font-size:12px;line-height:14px;color:#666">业务员名称</div>
<svg class="a" style="left:434px;top:10px" width="10" height="13" viewBox="0 0 10 13"><path d="M0,6 L5,0.5 L10,6 Z M0,7.5 L5,12.5 L10,7.5 Z" fill="#5f6b7f"/></svg>
<div class="a" style="left:449px;top:0;width:1px;height:33px;background:#f8f8f8"></div>
<div class="a" style="left:458.3px;top:10px;font-size:12px;line-height:14px;color:#666">客户名称</div>
<svg class="a" style="left:584px;top:10px" width="10" height="13" viewBox="0 0 10 13"><path d="M0,6 L5,0.5 L10,6 Z M0,7.5 L5,12.5 L10,7.5 Z" fill="#5f6b7f"/></svg>
<div class="a" style="left:599px;top:0;width:1px;height:33px;background:#f8f8f8"></div>
<div class="a" style="left:608.3px;top:10px;font-size:12px;line-height:14px;color:#666">存货名称</div>
<svg class="a" style="left:734px;top:10px" width="10" height="13" viewBox="0 0 10 13"><path d="M0,6 L5,0.5 L10,6 Z M0,7.5 L5,12.5 L10,7.5 Z" fill="#5f6b7f"/></svg>
<div class="a" style="left:749px;top:0;width:1px;height:33px;background:#f8f8f8"></div>
<div class="a" style="left:758.3px;top:10px;font-size:12px;line-height:14px;color:#666">所属地址</div>
<div class="a" style="left:0;top:33.0px;width:1048px;height:34px;background:#fff"></div>
<div class="a" style="left:0;top:66.1px;width:1048px;height:34px;background:#f9fafb"></div>
<div class="a" style="left:0;top:99.2px;width:1048px;height:34px;background:#fff"></div>
<div class="a" style="left:0;top:132.3px;width:1048px;height:34px;background:#f9fafb"></div>
<div class="a" style="left:0;top:66px;width:1048px;height:1px;background:#ececec"></div>
<div class="a" style="left:0;top:99px;width:1048px;height:1px;background:#ececec"></div>
<div class="a" style="left:0;top:132px;width:1048px;height:1px;background:#ececec"></div>
<div class="a" style="left:149px;top:33px;width:1px;height:120px;background:#ececec"></div>
<div class="a" style="left:299px;top:33px;width:1px;height:120px;background:#ececec"></div>
<div class="a" style="left:449px;top:33px;width:1px;height:120px;background:#ececec"></div>
<div class="a" style="left:599px;top:33px;width:1px;height:120px;background:#ececec"></div>
<div class="a" style="left:749px;top:33px;width:1px;height:120px;background:#ececec"></div>
<div class="a" style="left:8.5px;top:44.0px;font-size:12px;line-height:14px;color:#333">2015-01-09</div>
<div class="a" style="left:158.5px;top:44.0px;font-size:12px;line-height:14px;color:#333">0999</div>
<div class="a" style="left:308.5px;top:44.0px;font-size:12px;line-height:14px;color:#333">何彤</div>
<div class="a" style="left:458.5px;top:44.0px;font-size:12px;line-height:14px;color:#333">会员客户</div>
<div class="a" style="left:608.5px;top:44.0px;font-size:12px;line-height:14px;color:#333">布丁智能手机</div>
<div class="a" style="left:758.5px;top:44.0px;font-size:12px;line-height:14px;color:#333">内蒙古自治区包头市东河区</div>
<div class="a" style="left:8.5px;top:77.1px;font-size:12px;line-height:14px;color:#333">2015-01-09</div>
<div class="a" style="left:158.5px;top:77.1px;font-size:12px;line-height:14px;color:#333">0999</div>
<div class="a" style="left:308.5px;top:77.1px;font-size:12px;line-height:14px;color:#333">何彤</div>
<div class="a" style="left:458.5px;top:77.1px;font-size:12px;line-height:14px;color:#333">会员客户</div>
<div class="a" style="left:608.5px;top:77.1px;font-size:12px;line-height:14px;color:#333">手机壳</div>
<div class="a" style="left:758.5px;top:77.1px;font-size:12px;line-height:14px;color:#333">内蒙古自治区包头市东河区</div>
<div class="a" style="left:8.5px;top:110.2px;font-size:12px;line-height:14px;color:#333">2015-01-09</div>
<div class="a" style="left:158.5px;top:110.2px;font-size:12px;line-height:14px;color:#333">0999</div>
<div class="a" style="left:308.5px;top:110.2px;font-size:12px;line-height:14px;color:#333">何彤</div>
<div class="a" style="left:458.5px;top:110.2px;font-size:12px;line-height:14px;color:#333">会员客户</div>
<div class="a" style="left:608.5px;top:110.2px;font-size:12px;line-height:14px;color:#333">布丁智能手机</div>
<div class="a" style="left:758.5px;top:110.2px;font-size:12px;line-height:14px;color:#333">内蒙古自治区包头市东河区</div>
<div class="a" style="left:8.5px;top:143.3px;font-size:12px;line-height:14px;color:#333">2015-01-09</div>
<div class="a" style="left:158.5px;top:143.3px;font-size:12px;line-height:14px;color:#333">0999</div>
<div class="a" style="left:308.5px;top:143.3px;font-size:12px;line-height:14px;color:#333">何彤</div>
<div class="a" style="left:458.5px;top:143.3px;font-size:12px;line-height:14px;color:#333">会员客户</div>
<div class="a" style="left:608.5px;top:143.3px;font-size:12px;line-height:14px;color:#333">手机壳</div>
<div class="a" style="left:758.5px;top:143.3px;font-size:12px;line-height:14px;color:#333">内蒙古自治区包头市东河区</div>
<div class="a" style="left:1048px;top:0;width:9px;height:147px;background:#fff;border-right:1px solid #e8e8e8;border-top:1px solid #e8e8e8"></div>
<div class="a" style="left:1048px;top:34px;width:8px;height:21px;border-radius:4px;background:#b5b5b5"></div>
</div>
<!-- /charts -->
<!-- footer buttons -->
<div class="a" style="left:312px;top:687px;width:1098px;height:18px;background:#fff"></div>
<div class="a" style="left:569px;top:701px;width:137px;height:32px;border:1px solid #cfcfcf;border-radius:3px;background:#fff"></div>
<div class="a" style="left:717px;top:700px;width:138px;height:32px;border-radius:3px;background:#42a5f5"></div>

</body></html>
